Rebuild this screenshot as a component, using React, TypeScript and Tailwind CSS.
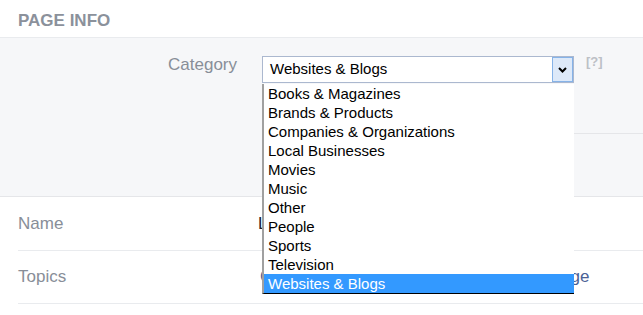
import React from "react";

const options = [
  "Books & Magazines",
  "Brands & Products",
  "Companies & Organizations",
  "Local Businesses",
  "Movies",
  "Music",
  "Other",
  "People",
  "Sports",
  "Television",
  "Websites & Blogs",
];

export default function App() {
  return (
    <div className="relative w-[643px] h-[315px] overflow-hidden bg-white font-['Liberation_Sans',Arial,sans-serif]">
      {/* Header */}
      <div className="h-[38px] border-b border-[#e9ebee] px-[18px] flex items-center">
        <span className="text-[17px] font-bold text-[#8b919b] leading-none mt-[3px]">PAGE INFO</span>
      </div>

      {/* Gray category panel */}
      <div className="h-[159px] bg-[#f6f7f9] border-b border-[#e5e6e9] flex flex-col">
        <div className="flex items-start pt-[18px]">
          <div className="w-[237px] text-right text-[17px] leading-[20px] text-[#888e98] -mt-[1px]">Category</div>
          <div className="ml-[25px] w-[312px] h-[27px] bg-white border border-[#abb8cf] flex items-stretch">
            <div className="flex-1 pl-[7px] flex items-center text-[15px] text-black">Websites &amp; Blogs</div>
            <div className="w-[21px] bg-[#dde9f9] border border-[#86b3e8] flex items-center justify-center">
              <svg width="9" height="6" viewBox="0 0 9 6">
                <polyline points="1,1 4.5,4.5 8,1" fill="none" stroke="#000" strokeWidth="2" />
              </svg>
            </div>
          </div>
          <div className="ml-[12px] text-[13px] font-bold text-[#bcc0c6] leading-[14px] -mt-[1px]">[?]</div>
        </div>
        <div className="ml-[262px] mt-[50px] border-t border-[#e5e6e9]" />
      </div>

      {/* Name row */}
      <div className="ml-[18px] h-[54px] border-b border-[#e9ebee] flex items-center">
        <div className="w-[240px] text-[17px] text-[#888e98]">Name</div>
        <div className="text-[17px] text-[#1d2129] whitespace-nowrap">Leslie's Blog</div>
      </div>

      {/* Topics row */}
      <div className="ml-[18px] h-[53px] border-b border-[#e9ebee] flex items-center">
        <div className="w-[242px] text-[17px] text-[#888e98]">Topics</div>
        <div className="text-[17px] text-[#4b6195] whitespace-nowrap tracking-[-0.1px]">Choose topics to help people find your Page</div>
      </div>

      {/* Open dropdown list */}
      <div className="absolute left-[262px] top-[84px] w-[312px] bg-white border-l-2 border-l-[#a0a0a0] border-b border-b-black">
        {options.map((o) => (
          <div
            key={o}
            className={
              o === "Websites & Blogs"
                ? "h-[19px] pl-[4px] text-[15px] leading-[19px] bg-[#3399ff] text-white"
                : "h-[19px] pl-[4px] text-[15px] leading-[19px] text-black"
            }
          >
            {o}
          </div>
        ))}
      </div>
    </div>
  );
}
